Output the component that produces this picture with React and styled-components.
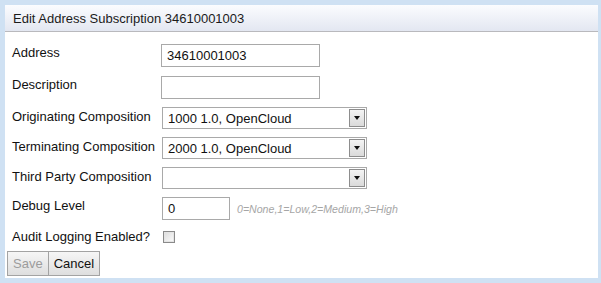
import React from "react";
import styled, { createGlobalStyle } from "styled-components";

const GlobalStyle = createGlobalStyle`
  html, body {
    margin: 0;
    padding: 0;
    background: #cfe1f3;
  }
  body {
    font-family: "Liberation Sans", Arial, sans-serif;
    font-size: 13px;
    color: #111;
  }
`;

const Frame = styled.div`
  width: 601px;
  height: 283px;
  box-sizing: border-box;
  padding: 5px 3px 5px 5px;
  background: #cfe1f3;
`;

const Dialog = styled.div`
  background: #fff;
  height: 100%;
  display: flex;
  flex-direction: column;
`;

const TitleBar = styled.div`
  height: 26px;
  border-bottom: 1px solid #b9b9bd;
  background: linear-gradient(to bottom, #fbfcfe, #e3e7f1);
  padding-left: 8px;
  display: flex;
  align-items: center;
  font-size: 13px;
  color: #1b1b1b;
`;

const Body = styled.div`
  padding: 12px 0 0 7px;
  display: flex;
  flex-direction: column;
`;

const Row = styled.div`
  display: flex;
  align-items: ${(p) => (p.$center ? "center" : "flex-start")};
  margin-bottom: ${(p) => p.$gap}px;
`;

const Label = styled.div`
  width: 149px;
  flex: none;
  padding-top: ${(p) => p.$top || 0}px;
  line-height: 15px;
`;

const TextBox = styled.div`
  box-sizing: border-box;
  width: ${(p) => p.$width}px;
  height: 23px;
  border: 1px solid #a9a9a9;
  padding: 0 5px;
  display: flex;
  align-items: center;
  margin-left: ${(p) => p.$offset || 0}px;
`;

const Select = styled.div`
  box-sizing: border-box;
  width: 205px;
  height: 22px;
  margin-left: 1px;
  border: 1px solid #a9a9a9;
  display: flex;
  align-items: stretch;
`;

const SelectText = styled.div`
  flex: 1;
  padding-left: 5px;
  display: flex;
  align-items: center;
`;

const DropButton = styled.div`
  width: 16px;
  margin: 1px;
  box-sizing: border-box;
  border: 1px solid #8d8d8d;
  background: linear-gradient(to bottom, #f4f4f4, #dadada);
  display: flex;
  align-items: center;
  justify-content: center;

  &::after {
    content: "";
    border-left: 3.5px solid transparent;
    border-right: 3.5px solid transparent;
    border-top: 4px solid #111;
  }
`;

const Hint = styled.span`
  margin-left: 7px;
  margin-top: 6px;
  font-size: 10.6px;
  font-style: italic;
  color: #a6a6a6;
`;

const Checkbox = styled.div`
  width: 12px;
  height: 12px;
  box-sizing: border-box;
  margin-left: 2px;
  border: 1px solid #8a8a8a;
  background: linear-gradient(135deg, #dcdcdc, #fbfbfb);
  box-shadow: inset 0 0 0 1px #e4e4e4;
`;

const Buttons = styled.div`
  display: flex;
  margin-left: -5px;
`;

const Button = styled.div`
  box-sizing: border-box;
  height: 25px;
  padding: 0 5px;
  border: 1px solid #a3a3a3;
  background: linear-gradient(to bottom, #f6f6f6, #dedede);
  display: flex;
  align-items: center;
  font-size: 13px;
  color: ${(p) => (p.disabled ? "#9c9c9c" : "#111")};
  & + & {
    border-left: none;
  }
`;

const fields = [
  { label: "Address", value: "34610001003", gap: 9 },
  { label: "Description", value: "", gap: 8 },
];

const selects = [
  { label: "Originating Composition", value: "1000 1.0, OpenCloud" },
  { label: "Terminating Composition", value: "2000 1.0, OpenCloud" },
  { label: "Third Party Composition", value: "" },
];

export default function App() {
  return (
    <>
      <GlobalStyle />
      <Frame>
        <Dialog>
          <TitleBar>Edit Address Subscription 34610001003</TitleBar>
          <Body>
            {fields.map((f) => (
              <Row key={f.label} $gap={f.gap}>
                <Label $top={1}>{f.label}</Label>
                <TextBox $width={159}>{f.value}</TextBox>
              </Row>
            ))}
            {selects.map((s) => (
              <Row key={s.label} $gap={8}>
                <Label $top={2}>{s.label}</Label>
                <Select>
                  <SelectText>{s.value}</SelectText>
                  <DropButton />
                </Select>
              </Row>
            ))}
            <Row $gap={9}>
              <Label $top={1}>Debug Level</Label>
              <TextBox $width={68} $offset={1}>0</TextBox>
              <Hint>0=None,1=Low,2=Medium,3=High</Hint>
            </Row>
            <Row $center $gap={7}>
              <Label>Audit Logging Enabled?</Label>
              <Checkbox />
            </Row>
            <Buttons>
              <Button disabled>Save</Button>
              <Button>Cancel</Button>
            </Buttons>
          </Body>
        </Dialog>
      </Frame>
    </>
  );
}
